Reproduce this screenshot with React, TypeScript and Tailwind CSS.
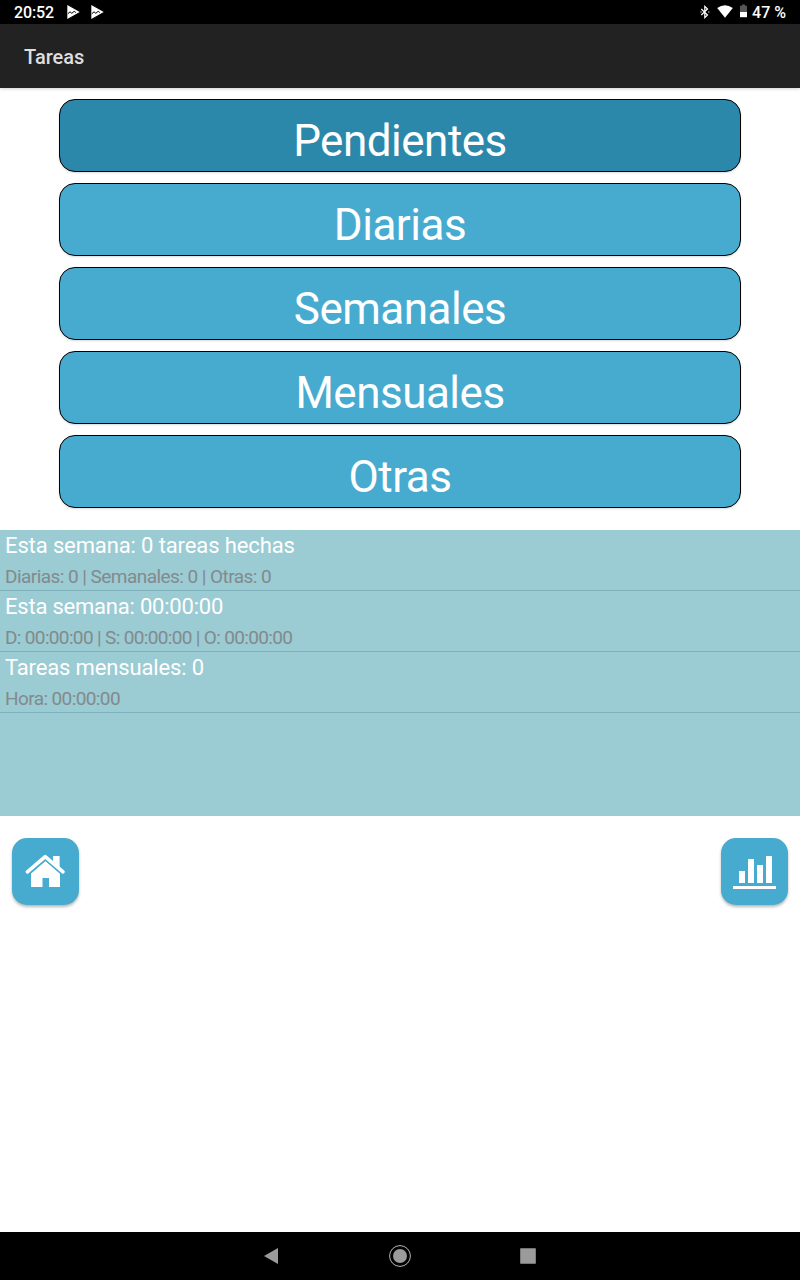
import { clsx } from "clsx";

const CATEGORIES = [
  { label: "Pendientes", selected: true },
  { label: "Diarias", selected: false },
  { label: "Semanales", selected: false },
  { label: "Mensuales", selected: false },
  { label: "Otras", selected: false },
];

const STATS = [
  {
    title: "Esta semana: 0 tareas hechas",
    titleClass: "tracking-[-0.12px]",
    detail: "Diarias: 0 | Semanales: 0 | Otras: 0",
    detailClass: "tracking-[-0.55px]",
  },
  {
    title: "Esta semana: 00:00:00",
    titleClass: "tracking-[-0.21px]",
    detail: "D: 00:00:00 | S: 00:00:00 | O: 00:00:00",
    detailClass: "tracking-[-0.65px]",
  },
  {
    title: "Tareas mensuales: 0",
    titleClass: "tracking-[-0.14px]",
    detail: "Hora: 00:00:00",
    detailClass: "tracking-[-0.6px]",
  },
];

function PlayNotificationIcon() {
  return (
    <svg width="13" height="14" viewBox="0 0 13 14">
      <path d="M0.3 0v14L12.7 7z" fill="#fff" />
      <path d="M0.8 8.8l2.2-2 1.8 1.5 2.4-2 1.6 1.3" fill="none" stroke="#000" strokeWidth="1" />
    </svg>
  );
}

function StatusBar() {
  return (
    <div className="flex h-6 items-center justify-between bg-black px-[14px] text-base font-medium text-white">
      <div className="flex items-center">
        <span className="w-[52.5px] pt-px tracking-[-0.1px]">20:52</span>
        <PlayNotificationIcon />
        <span className="w-[11px]" />
        <PlayNotificationIcon />
      </div>
      <div className="flex items-center">
        {/* bluetooth */}
        <svg width="10" height="14" viewBox="0 0 10 14" fill="none" stroke="#fff" strokeWidth="1.2">
          <path d="M1.3 4l6.2 6L4.8 12.6V1.4L7.5 4l-6.2 6" />
          <path d="M0.4 7h1.2M8.2 7h1.2" />
        </svg>
        {/* wifi */}
        <svg className="mb-px ml-[7px]" width="16" height="13" viewBox="0 0 16 13">
          <path d="M0.2 3.1Q8-2.6 15.8 3.1L8 12.7z" fill="#fff" />
        </svg>
        {/* battery */}
        <svg className="mr-[5px] mb-[2px] ml-[7px]" width="7" height="14" viewBox="0 0 7 14">
          <path d="M2 0.5h3v1.3h2V8H0V1.8h2z" fill="#555" />
          <path d="M0 8h7v5.2H0z" fill="#fff" />
        </svg>
        <span className="pt-px">47 %</span>
      </div>
    </div>
  );
}

function HomeIcon() {
  return (
    <svg width="67" height="67" viewBox="0 0 67 67" fill="#fff">
      <path d="M19 35.5L33.5 23 48 35.5V49H37V40h-6.5v9H19z" />
      <path d="M15.4 34.8L33.2 19.3 51 34.8" fill="none" stroke="#47abd0" strokeWidth="5.4" />
      <path d="M41 18h6.6v14L41 26z" />
      <path d="M15.4 33.8L33.2 18.6 51 33.8" fill="none" stroke="#fff" strokeWidth="3.6" strokeLinecap="round" strokeLinejoin="round" />
    </svg>
  );
}

function ChartIcon() {
  return (
    <svg width="67" height="67" viewBox="0 0 67 67" fill="#fff">
      <path d="M18 33h6v12h-6zM27 21h6v24h-6zM36 27h6v18h-6zM45 18h6v27h-6zM12 48h43v3H12z" />
    </svg>
  );
}

function NavigationBar() {
  return (
    <div className="flex h-12 items-center justify-center gap-[106px] bg-black">
      <svg width="22" height="22" viewBox="0 0 22 22">
        <path d="M3 11L17 3v16z" fill="#9b9b9b" />
      </svg>
      <svg width="22" height="22" viewBox="0 0 22 22">
        <circle cx="11" cy="11" r="10.4" fill="none" stroke="#b4b4b4" strokeWidth="1" />
        <circle cx="11" cy="11" r="7" fill="#9b9b9b" />
      </svg>
      <svg width="22" height="22" viewBox="0 0 22 22">
        <rect x="3.2" y="3.2" width="15.6" height="15.6" rx="0.5" fill="#9b9b9b" />
      </svg>
    </div>
  );
}

export default function App() {
  return (
    <div className="flex h-screen w-full flex-col overflow-hidden bg-white font-['Roboto',sans-serif]">
      <StatusBar />

      <header className="z-10 flex h-16 items-center bg-[#222222] px-6 pt-[2px] shadow-[0_1px_3px_rgba(0,0,0,0.18)]">
        <h1 className="text-xl font-medium text-[#dedede]">Tareas</h1>
      </header>

      {/* Categories */}
      <div className="flex flex-col gap-[11px] px-[59px] pt-[11px]">
        {CATEGORIES.map((category) => (
          <button
            key={category.label}
            className={clsx(
              "flex h-[73px] items-center justify-center rounded-[16px] border border-black pt-[11px] text-[44px] leading-none tracking-[-0.5px] text-white shadow-[0_1px_2px_rgba(0,0,0,0.15)]",
              category.selected ? "bg-[#2b88aa]" : "bg-[#47abd0]",
            )}
          >
            {category.label}
          </button>
        ))}
      </div>

      {/* Stats */}
      <section className="mt-[22px] h-[286px] bg-[#9bcbd3]">
        {STATS.map((stat) => (
          <div key={stat.title} className="h-[61px] border-b border-[#7fb1ba] pl-[5px]">
            <p className={clsx("text-[22px] leading-[31px] text-white", stat.titleClass)}>{stat.title}</p>
            <p className={clsx("text-[19px] leading-[31px] text-[#828a8c]", stat.detailClass)}>{stat.detail}</p>
          </div>
        ))}
      </section>

      <div className="mt-[22px] flex justify-between px-3">
        <button className="h-[67px] w-[67px] rounded-[15px] bg-[#47abd0] shadow-[0_2px_3px_rgba(0,0,0,0.28)]" aria-label="Inicio">
          <HomeIcon />
        </button>
        <button className="h-[67px] w-[67px] rounded-[15px] bg-[#47abd0] shadow-[0_2px_3px_rgba(0,0,0,0.28)]" aria-label="Estadísticas">
          <ChartIcon />
        </button>
      </div>

      <div className="flex-1" />
      <NavigationBar />
    </div>
  );
}
